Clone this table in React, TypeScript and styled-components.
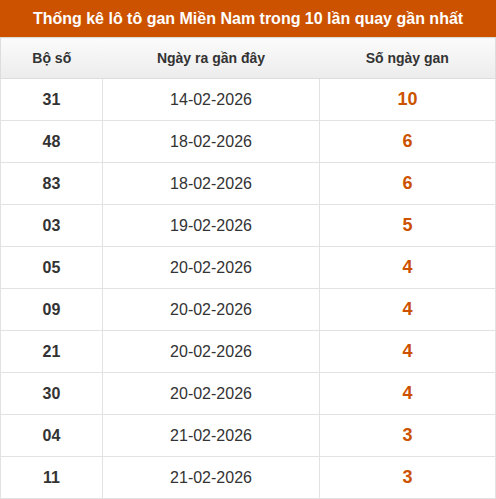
import React from 'react';
import styled, { createGlobalStyle } from 'styled-components';

const GlobalStyle = createGlobalStyle`
  body {
    margin: 0;
    background: #fff;
    font-family: 'Liberation Sans', Arial, sans-serif;
  }
`;

const Wrapper = styled.div`
  width: 496px;
`;

const Title = styled.h2`
  margin: 0;
  height: 37px;
  line-height: 37px;
  background: #cc5200;
  color: #fff;
  font-size: 16px;
  font-weight: bold;
  text-align: center;
`;

const Table = styled.table`
  width: 496px;
  border-collapse: collapse;
  table-layout: fixed;
`;

const HeadCell = styled.th`
  height: 40px;
  padding: 0;
  font-size: 14px;
  font-weight: bold;
  color: #333;
  background: linear-gradient(to bottom, #fbfbfb, #ececec);
  border-top: 1px solid #ddd;
  border-bottom: 1px solid #ddd;
  &:first-child {
    border-left: 1px solid #ddd;
  }
  &:last-child {
    border-right: 1px solid #ddd;
  }
`;

const Cell = styled.td<{ $kind?: 'num' | 'date' | 'gan' }>`
  height: 41px;
  padding: 0;
  text-align: center;
  border: 1px solid #e2e2e2;
  font-size: ${p => (p.$kind === 'gan' ? '18px' : '16px')};
  font-weight: ${p => (p.$kind === 'date' ? 'normal' : 'bold')};
  color: ${p => (p.$kind === 'gan' ? '#cc5200' : '#333')};
`;

const rows = [
  ['31', '14-02-2026', '10'],
  ['48', '18-02-2026', '6'],
  ['83', '18-02-2026', '6'],
  ['03', '19-02-2026', '5'],
  ['05', '20-02-2026', '4'],
  ['09', '20-02-2026', '4'],
  ['21', '20-02-2026', '4'],
  ['30', '20-02-2026', '4'],
  ['04', '21-02-2026', '3'],
  ['11', '21-02-2026', '3'],
];

export default function App() {
  return (
    <Wrapper>
      <GlobalStyle />
      <Title>Thống kê lô tô gan Miền Nam trong 10 lần quay gần nhất</Title>
      <Table>
        <colgroup>
          <col style={{ width: 102 }} />
          <col style={{ width: 217 }} />
          <col />
        </colgroup>
        <thead>
          <tr>
            <HeadCell>Bộ số</HeadCell>
            <HeadCell>Ngày ra gần đây</HeadCell>
            <HeadCell>Số ngày gan</HeadCell>
          </tr>
        </thead>
        <tbody>
          {rows.map(r => (
            <tr key={r[0]}>
              <Cell $kind='num'>{r[0]}</Cell>
              <Cell $kind='date'>{r[1]}</Cell>
              <Cell $kind='gan'>{r[2]}</Cell>
            </tr>
          ))}
        </tbody>
      </Table>
    </Wrapper>
  );
}
